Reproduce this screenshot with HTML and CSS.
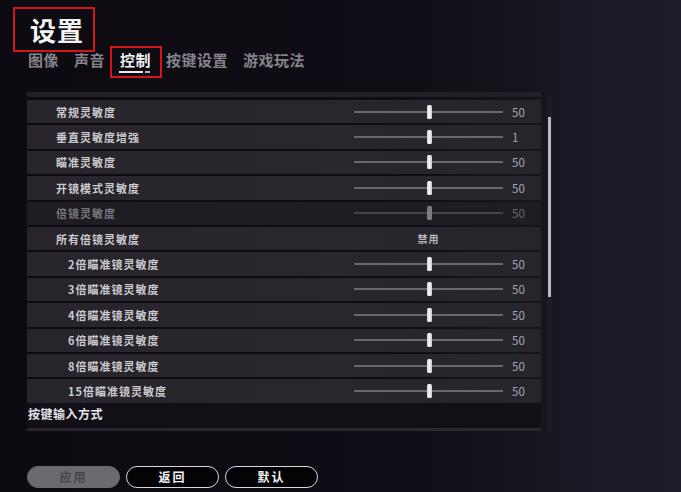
FILE: index.html
```html
<!DOCTYPE html>
<html lang="zh-CN">
<head>
    <meta charset="UTF-8">
    <meta name="viewport" content="width=device-width, initial-scale=1.0">
    <title>设置</title>
    <link rel="stylesheet" href="styles.css">
</head>
<body>

<div class="screen">
    <!-- Title -->
    <div class="title-box">
        <h1>设置</h1>
    </div>

    <!-- Tabs -->
    <nav class="tabs">
        <span class="tab">图像</span>
        <span class="tab">声音</span>
        <span class="tab active">控制</span>
        <span class="tab">按键设置</span>
        <span class="tab">游戏玩法</span>
    </nav>

    <!-- Settings list -->
    <div class="panel-wrap">
        <div class="panel">
            <div class="panel-top"></div>
            <div class="rows">
                <div class="row">
                    <span class="label">常规灵敏度</span>
                    <div class="slider"><div class="track"></div><div class="thumb"></div></div>
                    <span class="value">50</span>
                </div>
                <div class="row">
                    <span class="label">垂直灵敏度增强</span>
                    <div class="slider"><div class="track"></div><div class="thumb"></div></div>
                    <span class="value">1</span>
                </div>
                <div class="row">
                    <span class="label">瞄准灵敏度</span>
                    <div class="slider"><div class="track"></div><div class="thumb"></div></div>
                    <span class="value">50</span>
                </div>
                <div class="row">
                    <span class="label">开镜模式灵敏度</span>
                    <div class="slider"><div class="track"></div><div class="thumb"></div></div>
                    <span class="value">50</span>
                </div>
                <div class="row disabled">
                    <span class="label">倍镜灵敏度</span>
                    <div class="slider"><div class="track"></div><div class="thumb"></div></div>
                    <span class="value">50</span>
                </div>
                <div class="row">
                    <span class="label">所有倍镜灵敏度</span>
                    <div class="slider option">禁用</div>
                    <span class="value"></span>
                </div>
                <div class="row sub">
                    <span class="label">2倍瞄准镜灵敏度</span>
                    <div class="slider"><div class="track"></div><div class="thumb"></div></div>
                    <span class="value">50</span>
                </div>
                <div class="row sub">
                    <span class="label">3倍瞄准镜灵敏度</span>
                    <div class="slider"><div class="track"></div><div class="thumb"></div></div>
                    <span class="value">50</span>
                </div>
                <div class="row sub">
                    <span class="label">4倍瞄准镜灵敏度</span>
                    <div class="slider"><div class="track"></div><div class="thumb"></div></div>
                    <span class="value">50</span>
                </div>
                <div class="row sub">
                    <span class="label">6倍瞄准镜灵敏度</span>
                    <div class="slider"><div class="track"></div><div class="thumb"></div></div>
                    <span class="value">50</span>
                </div>
                <div class="row sub">
                    <span class="label">8倍瞄准镜灵敏度</span>
                    <div class="slider"><div class="track"></div><div class="thumb"></div></div>
                    <span class="value">50</span>
                </div>
                <div class="row sub">
                    <span class="label">15倍瞄准镜灵敏度</span>
                    <div class="slider"><div class="track"></div><div class="thumb"></div></div>
                    <span class="value">50</span>
                </div>
            </div>
            <div class="group">按键输入方式</div>
            <div class="panel-line"></div>
        </div>

        <!-- Scrollbar -->
        <div class="scrollbar">
            <div class="scroll-thumb"></div>
        </div>
    </div>

    <!-- Bottom buttons -->
    <div class="buttons">
        <button class="btn apply">应用</button>
        <button class="btn">返回</button>
        <button class="btn">默认</button>
    </div>
</div>

</body>
</html>
```

FILE: styles.css
```css
html, body {
    margin: 0;
    padding: 0;
}
body {
    width: 681px;
    height: 492px;
    overflow: hidden;
    font-family: "Noto Sans CJK SC", "Noto Sans", sans-serif;
    background: linear-gradient(90deg, #0d0a12 0%, #100d16 60%, #16141e 78%, #1c1a26 88%, #1e1c28 100%);
    color: #fff;
}
.screen {
    padding-top: 7px;
}
.title-box {
    width: 78px;
    height: 41px;
    margin-left: 13px;
    border: 2px solid #d3161d;
    display: flex;
    align-items: center;
}
h1 {
    margin: 0 0 0 15px;
    font-size: 26px;
    line-height: 30px;
    font-weight: 700;
    letter-spacing: 1px;
    color: #f4f4f4;
}
.tabs {
    display: flex;
    gap: 15px;
    margin-left: 28px;
    height: 16px;
    line-height: 16px;
}
.tab {
    font-size: 15px;
    font-weight: 700;
    letter-spacing: 0.5px;
    color: #85848a;
    position: relative;
}
.tab.active {
    color: #f2f2f2;
}
/* red highlight box */
.tab.active::before {
    content: "";
    position: absolute;
    left: -10px;
    right: -11px;
    top: -6px;
    bottom: -10px;
    border: 2px solid #d3161d;
}
/* underline */
.tab.active::after {
    content: "";
    position: absolute;
    left: -1px;
    width: 31px;
    bottom: -5px;
    height: 2px;
    background: linear-gradient(90deg, #ececec 0 24px, transparent 24px 26px, #b8b8b8 26px 31px);
}
.panel-wrap {
    display: flex;
    margin-top: 24px;
    margin-left: 27px;
}
.panel {
    width: 514px;
}
.panel-top {
    height: 5px;
    background: #221f27;
    margin-bottom: 3px;
}
.rows {
    display: flex;
    flex-direction: column;
    gap: 2px;
}
.row {
    height: 23.4px;
    display: grid;
    grid-template-columns: 1fr 149px 38px;
    align-items: center;
    padding-left: 29px;
    background: linear-gradient(90deg, #27252b 0%, #29272e 60%, #27252c 100%);
}
.row.sub {
    padding-left: 41px;
}
.label {
    font-size: 11px;
    font-weight: 700;
    letter-spacing: 1px;
    color: #cbcace;
}
.slider {
    position: relative;
    height: 14px;
}
.track {
    position: absolute;
    left: 0;
    right: 0;
    top: 6px;
    height: 2px;
    background: #69686e;
}
.thumb {
    position: absolute;
    left: 73px;
    top: 0;
    width: 5px;
    height: 14px;
    border-radius: 1.5px;
    background: linear-gradient(90deg, #d6d6d8, #f4f4f4 50%, #c9c9cc);
}
.value {
    padding-left: 9px;
    font-size: 11.5px;
    color: #a8a7ad;
}
.option {
    text-align: center;
    font-size: 10px;
    line-height: 14px;
    font-weight: 700;
    color: #b9b8bd;
    letter-spacing: 1px;
}
.row.disabled {
    background: #1f1d23;
}
.row.disabled .label {
    color: #77767c;
}
.row.disabled .track {
    background: #44434a;
}
.row.disabled .thumb {
    background: #7b7a80;
}
.row.disabled .value {
    color: #6c6b71;
}
.group {
    height: 25px;
    line-height: 21px;
    padding-left: 1px;
    font-size: 12px;
    font-weight: 700;
    letter-spacing: 0.5px;
    color: #e4e4e6;
    background: #120f17;
}
.panel-line {
    height: 3px;
    background: #2a2730;
}
.scrollbar {
    width: 5px;
    margin-left: 6px;
    margin-top: 4px;
    height: 336px;
    background: #1e1c24;
}
.scroll-thumb {
    width: 3px;
    margin-left: 1px;
    margin-top: 21px;
    height: 180px;
    background: #b9b8c0;
}
.buttons {
    display: flex;
    gap: 6px;
    margin-top: 34px;
    margin-left: 27px;
}
.btn {
    width: 93px;
    height: 22px;
    border-radius: 11px;
    border: 1.5px solid #d8d8dc;
    background: #040306;
    color: #f4f4f4;
    font-family: "Noto Sans CJK SC", sans-serif;
    font-size: 12px;
    font-weight: 700;
    letter-spacing: 2px;
    padding: 0;
    line-height: 18px;
}
.btn.apply {
    background: #6b6a70;
    border-color: #6b6a70;
    color: #45444a;
}
```
